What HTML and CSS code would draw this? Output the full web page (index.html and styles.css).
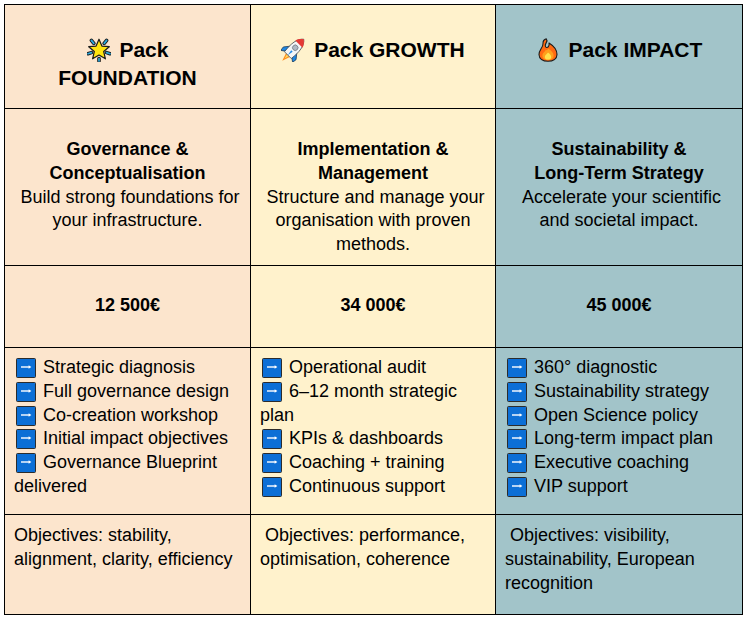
FILE: index.html
```html
<!DOCTYPE html>
<html lang="en">
<head>
<meta charset="utf-8">
<title>Packs</title>
<link rel="stylesheet" href="styles.css">
</head>
<body>
<div class="page">
  <div class="sheet">
    <!-- Row 1: pack names -->
    <div class="cell col-a r1 head">
      <svg class="emoji" viewBox="0 0 24 24" width="24" height="24">
        <g stroke="#1b1b1b" stroke-width="3.6" stroke-linecap="round">
          <line x1="17.2" y1="5.4" x2="19.6" y2="2.4"/>
          <line x1="19.6" y1="14.6" x2="23" y2="15.7"/>
          <line x1="4.4" y1="14.6" x2="1" y2="15.7"/>
          <line x1="6.8" y1="5.4" x2="4.4" y2="2.4"/>
          <line x1="12" y1="20.5" x2="12" y2="23"/>
        </g>
        <g stroke="#2aa7dc" stroke-width="1.7" stroke-linecap="round">
          <line x1="17.2" y1="5.4" x2="19.6" y2="2.4"/>
          <line x1="19.6" y1="14.6" x2="23" y2="15.7"/>
          <line x1="4.4" y1="14.6" x2="1" y2="15.7"/>
          <line x1="6.8" y1="5.4" x2="4.4" y2="2.4"/>
          <line x1="12" y1="20.5" x2="12" y2="23"/>
        </g>
        <path d="M12 1.2 L14.9 8.1 L22.3 8.7 L16.7 13.5 L18.4 20.8 L12 17 L5.6 20.8 L7.3 13.5 L1.7 8.7 L9.1 8.1 Z" fill="#ffe40f" stroke="#1b1b1b" stroke-width="1.2" stroke-linejoin="round"/>
      </svg> Pack<br>FOUNDATION
    </div>
    <div class="cell col-b r1 head">
      <svg class="emoji" viewBox="0 0 24 24" width="24" height="24">
        <g transform="translate(12 12) rotate(45) scale(1.45) translate(-12 -12)">
          <path d="M10.2 17 L12 22.5 L13.8 17 Z" fill="#ff8f1f"/>
          <path d="M11.2 17 L12 20.2 L12.8 17 Z" fill="#ffe066"/>
          <path d="M8.8 11.5 L5.8 15.2 L6.2 18.2 L9.2 16 Z" fill="#1e88e5" stroke="#1a3552" stroke-width="0.5"/>
          <path d="M15.2 11.5 L18.2 15.2 L17.8 18.2 L14.8 16 Z" fill="#1e88e5" stroke="#1a3552" stroke-width="0.5"/>
          <path d="M12 1.5 C15.6 4.3 16.2 10 15.3 17 L8.7 17 C7.8 10 8.4 4.3 12 1.5 Z" fill="#f4f6f8" stroke="#3a4048" stroke-width="0.5"/>
          <path d="M12 1.5 C13.9 3 15 4.6 15.5 6.2 L8.5 6.2 C9 4.6 10.1 3 12 1.5 Z" fill="#e53935"/>
          <circle cx="12" cy="9.8" r="1.9" fill="#b0b8c4" stroke="#6b7480" stroke-width="0.5"/>
          <path d="M11.3 13 L12 17.2 L12.7 13 Z" fill="#1e88e5"/>
        </g>
      </svg> Pack GROWTH
    </div>
    <div class="cell col-c r1 head">
      <svg class="emoji" viewBox="0 0 24 24" width="24" height="24">
        <path d="M10.3 0.9 C12.6 3.6 8.8 4.8 9.3 8 C9.5 9.7 11.5 9.9 12.4 8.6 C13.5 7 13 5 13 5 C17.6 7.8 21 12 21 16.6 C21 20.8 17.2 23.3 12 23.3 C6.8 23.3 3 20.8 3 16.6 C3 11.6 7.2 9.6 7 5.6 C6.9 3.6 8.4 1.4 10.3 0.9 Z" fill="#ff6a13" stroke="#1b1b1b" stroke-width="1.1" stroke-linejoin="round"/>
        <path d="M12 10.5 C15.2 12.6 17.6 14.8 17.6 17.6 C17.6 20.6 15.2 22.1 12 22.1 C8.8 22.1 6.4 20.6 6.4 17.6 C6.4 15 9.2 13.8 9.8 11.8 C10.8 12.7 11.6 11.8 12 10.5 Z" fill="#ff9f1c"/>
        <path d="M12 14.5 C14 16 15.2 17.4 15.2 18.9 C15.2 20.7 13.8 21.6 12 21.6 C10.2 21.6 8.8 20.7 8.8 18.9 C8.8 17.3 10.6 16.5 12 14.5 Z" fill="#ffe14d"/>
      </svg> Pack IMPACT
    </div>

    <!-- Row 2: descriptions -->
    <div class="cell col-a r2 desc">
      <div class="title">Governance &amp;<br>Conceptualisation</div>
      <div>&nbsp;Build strong foundations for your infrastructure.</div>
    </div>
    <div class="cell col-b r2 desc">
      <div class="title">Implementation &amp;<br>Management</div>
      <div>&nbsp;Structure and manage your organisation with proven methods.</div>
    </div>
    <div class="cell col-c r2 desc">
      <div class="title">Sustainability &amp;<br>Long-Term Strategy</div>
      <div>&nbsp;Accelerate your scientific and societal impact.</div>
    </div>

    <!-- Row 3: prices -->
    <div class="cell col-a r3 price">12 500€</div>
    <div class="cell col-b r3 price">34 000€</div>
    <div class="cell col-c r3 price">45 000€</div>

    <!-- Row 4: contents -->
    <div class="cell col-a r4 list">
      <div class="item"><svg class="arrow" viewBox="0 0 20 20" width="20" height="20"><rect x="0.5" y="0.5" width="19" height="19" rx="1" fill="#0c6fd6" stroke="#2c2c2c"/><path d="M5 9 H13.5" stroke="#fff" stroke-width="1.4"/><path d="M12.6 7.2 L15.4 9 L12.6 10.8 Z" fill="#fff"/></svg> Strategic diagnosis</div>
      <div class="item"><svg class="arrow" viewBox="0 0 20 20" width="20" height="20"><rect x="0.5" y="0.5" width="19" height="19" rx="1" fill="#0c6fd6" stroke="#2c2c2c"/><path d="M5 9 H13.5" stroke="#fff" stroke-width="1.4"/><path d="M12.6 7.2 L15.4 9 L12.6 10.8 Z" fill="#fff"/></svg> Full governance design</div>
      <div class="item"><svg class="arrow" viewBox="0 0 20 20" width="20" height="20"><rect x="0.5" y="0.5" width="19" height="19" rx="1" fill="#0c6fd6" stroke="#2c2c2c"/><path d="M5 9 H13.5" stroke="#fff" stroke-width="1.4"/><path d="M12.6 7.2 L15.4 9 L12.6 10.8 Z" fill="#fff"/></svg> Co-creation workshop</div>
      <div class="item"><svg class="arrow" viewBox="0 0 20 20" width="20" height="20"><rect x="0.5" y="0.5" width="19" height="19" rx="1" fill="#0c6fd6" stroke="#2c2c2c"/><path d="M5 9 H13.5" stroke="#fff" stroke-width="1.4"/><path d="M12.6 7.2 L15.4 9 L12.6 10.8 Z" fill="#fff"/></svg> Initial impact objectives</div>
      <div class="item"><svg class="arrow" viewBox="0 0 20 20" width="20" height="20"><rect x="0.5" y="0.5" width="19" height="19" rx="1" fill="#0c6fd6" stroke="#2c2c2c"/><path d="M5 9 H13.5" stroke="#fff" stroke-width="1.4"/><path d="M12.6 7.2 L15.4 9 L12.6 10.8 Z" fill="#fff"/></svg> Governance Blueprint delivered</div>
    </div>
    <div class="cell col-b r4 list">
      <div class="item"><svg class="arrow" viewBox="0 0 20 20" width="20" height="20"><rect x="0.5" y="0.5" width="19" height="19" rx="1" fill="#0c6fd6" stroke="#2c2c2c"/><path d="M5 9 H13.5" stroke="#fff" stroke-width="1.4"/><path d="M12.6 7.2 L15.4 9 L12.6 10.8 Z" fill="#fff"/></svg> Operational audit</div>
      <div class="item"><svg class="arrow" viewBox="0 0 20 20" width="20" height="20"><rect x="0.5" y="0.5" width="19" height="19" rx="1" fill="#0c6fd6" stroke="#2c2c2c"/><path d="M5 9 H13.5" stroke="#fff" stroke-width="1.4"/><path d="M12.6 7.2 L15.4 9 L12.6 10.8 Z" fill="#fff"/></svg> 6–12 month strategic plan</div>
      <div class="item"><svg class="arrow" viewBox="0 0 20 20" width="20" height="20"><rect x="0.5" y="0.5" width="19" height="19" rx="1" fill="#0c6fd6" stroke="#2c2c2c"/><path d="M5 9 H13.5" stroke="#fff" stroke-width="1.4"/><path d="M12.6 7.2 L15.4 9 L12.6 10.8 Z" fill="#fff"/></svg> KPIs &amp; dashboards</div>
      <div class="item"><svg class="arrow" viewBox="0 0 20 20" width="20" height="20"><rect x="0.5" y="0.5" width="19" height="19" rx="1" fill="#0c6fd6" stroke="#2c2c2c"/><path d="M5 9 H13.5" stroke="#fff" stroke-width="1.4"/><path d="M12.6 7.2 L15.4 9 L12.6 10.8 Z" fill="#fff"/></svg> Coaching + training</div>
      <div class="item"><svg class="arrow" viewBox="0 0 20 20" width="20" height="20"><rect x="0.5" y="0.5" width="19" height="19" rx="1" fill="#0c6fd6" stroke="#2c2c2c"/><path d="M5 9 H13.5" stroke="#fff" stroke-width="1.4"/><path d="M12.6 7.2 L15.4 9 L12.6 10.8 Z" fill="#fff"/></svg> Continuous support</div>
    </div>
    <div class="cell col-c r4 list">
      <div class="item"><svg class="arrow" viewBox="0 0 20 20" width="20" height="20"><rect x="0.5" y="0.5" width="19" height="19" rx="1" fill="#0c6fd6" stroke="#2c2c2c"/><path d="M5 9 H13.5" stroke="#fff" stroke-width="1.4"/><path d="M12.6 7.2 L15.4 9 L12.6 10.8 Z" fill="#fff"/></svg> 360° diagnostic</div>
      <div class="item"><svg class="arrow" viewBox="0 0 20 20" width="20" height="20"><rect x="0.5" y="0.5" width="19" height="19" rx="1" fill="#0c6fd6" stroke="#2c2c2c"/><path d="M5 9 H13.5" stroke="#fff" stroke-width="1.4"/><path d="M12.6 7.2 L15.4 9 L12.6 10.8 Z" fill="#fff"/></svg> Sustainability strategy</div>
      <div class="item"><svg class="arrow" viewBox="0 0 20 20" width="20" height="20"><rect x="0.5" y="0.5" width="19" height="19" rx="1" fill="#0c6fd6" stroke="#2c2c2c"/><path d="M5 9 H13.5" stroke="#fff" stroke-width="1.4"/><path d="M12.6 7.2 L15.4 9 L12.6 10.8 Z" fill="#fff"/></svg> Open Science policy</div>
      <div class="item"><svg class="arrow" viewBox="0 0 20 20" width="20" height="20"><rect x="0.5" y="0.5" width="19" height="19" rx="1" fill="#0c6fd6" stroke="#2c2c2c"/><path d="M5 9 H13.5" stroke="#fff" stroke-width="1.4"/><path d="M12.6 7.2 L15.4 9 L12.6 10.8 Z" fill="#fff"/></svg> Long-term impact plan</div>
      <div class="item"><svg class="arrow" viewBox="0 0 20 20" width="20" height="20"><rect x="0.5" y="0.5" width="19" height="19" rx="1" fill="#0c6fd6" stroke="#2c2c2c"/><path d="M5 9 H13.5" stroke="#fff" stroke-width="1.4"/><path d="M12.6 7.2 L15.4 9 L12.6 10.8 Z" fill="#fff"/></svg> Executive coaching</div>
      <div class="item"><svg class="arrow" viewBox="0 0 20 20" width="20" height="20"><rect x="0.5" y="0.5" width="19" height="19" rx="1" fill="#0c6fd6" stroke="#2c2c2c"/><path d="M5 9 H13.5" stroke="#fff" stroke-width="1.4"/><path d="M12.6 7.2 L15.4 9 L12.6 10.8 Z" fill="#fff"/></svg> VIP support</div>
    </div>

    <!-- Row 5: objectives -->
    <div class="cell col-a r5 obj">Objectives: stability, alignment, clarity, efficiency</div>
    <div class="cell col-b r5 obj">&nbsp;Objectives: performance, optimisation, coherence</div>
    <div class="cell col-c r5 obj">&nbsp;Objectives: visibility, sustainability, European recognition</div>
  </div>
</div>
</body>
</html>
```

FILE: styles.css
```css
html, body {
  margin: 0;
  padding: 0;
  background: #ffffff;
}

.page {
  padding: 4px;
  font-family: "Liberation Sans", Arial, sans-serif;
  color: #000;
}

.sheet {
  display: grid;
  grid-template-columns: 246px 245px 247px;
  grid-template-rows: 104px 157px 82px 167px 100px;
  width: 739px;
  box-sizing: border-box;
  border-top: 1px solid #000;
  border-left: 1px solid #000;
}

.cell {
  box-sizing: border-box;
  border-right: 1px solid #000;
  border-bottom: 1px solid #000;
  padding: 0 8px 0 9px;
  font-size: 18px;
  line-height: 23.8px;
}

.col-a { background: #fce5cd; }
.col-b { background: #fff2cc; }
.col-c { background: #a2c4c9; }

.r1 { padding-top: 31px; }
.r2 { padding-top: 29px; }
.r3 { padding-top: 28px; }
.r4 { padding-top: 8px; }
.r5 { padding-top: 9px; }

.head {
  text-align: center;
  font-weight: bold;
  font-size: 21px;
  line-height: 27.5px;
  padding-left: 8px;
}

.emoji {
  display: inline-block;
  vertical-align: -5px;
  margin-right: 3px;
}

.desc {
  text-align: center;
  padding-left: 8px;
}

.title {
  font-weight: bold;
}

.price {
  text-align: center;
  font-weight: bold;
  padding-left: 8px;
}

.arrow {
  display: inline-block;
  vertical-align: -5px;
  margin: 0 2px 0 2px;
}

.obj {
  text-align: left;
}
```
